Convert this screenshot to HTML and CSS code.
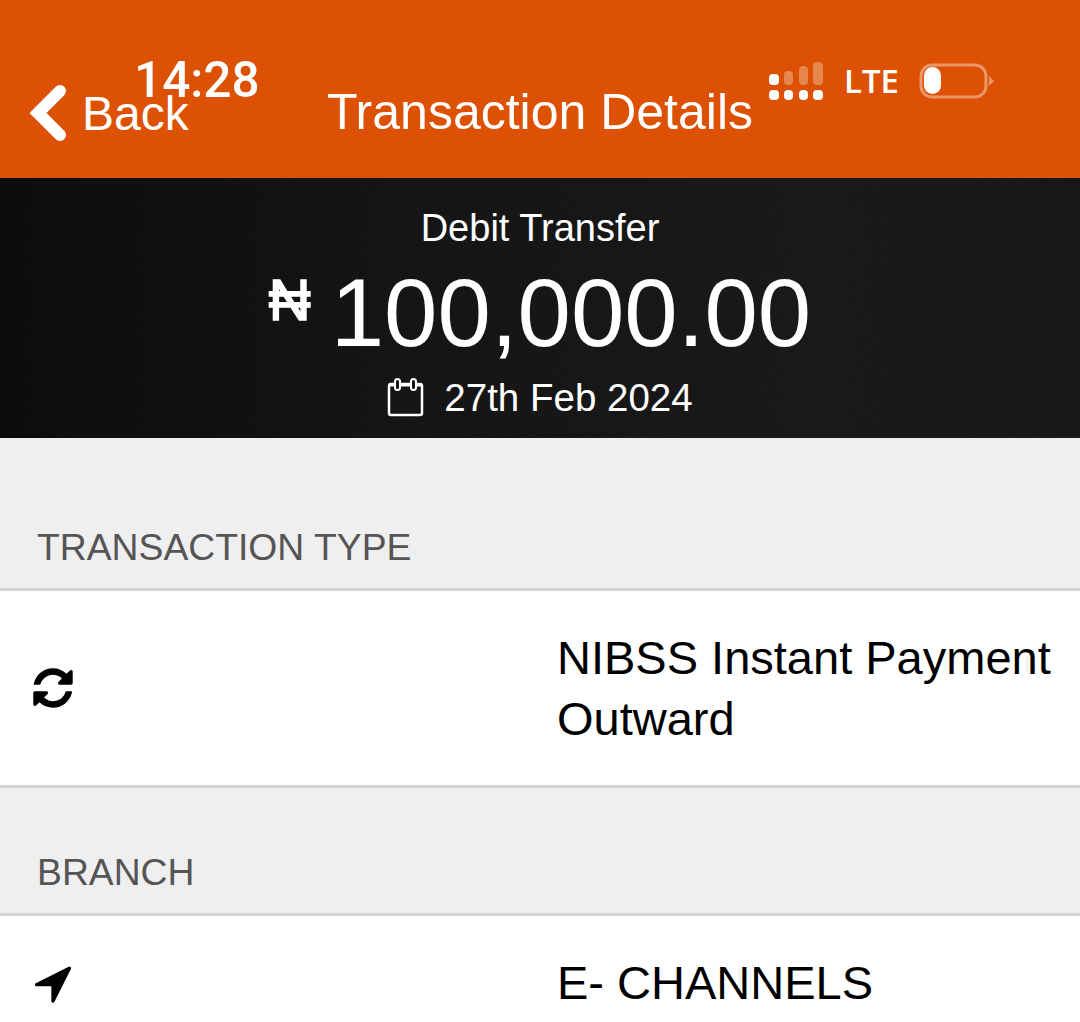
FILE: index.html
```html
<!DOCTYPE html>
<html>
<head>
    <title>Transaction Details</title>
    <link rel="stylesheet" href="styles.css">
</head>
<body>
    <header class="navbar">
        <a class="back">
            <svg class="back-icon" width="38" height="60" viewBox="0 0 38 60">
                <path d="M31 8 L9 30 L31 52" fill="none" stroke="#fff" stroke-width="12" stroke-linecap="round" stroke-linejoin="miter"/>
            </svg>
            <span>Back</span>
        </a>
        <h1 class="title">Transaction Details</h1>
        <span class="clock">14:28</span>
        <div class="status">
            <svg width="55" height="39" viewBox="0 0 55 39">
                <g fill="#fff">
                    <rect x="0" y="12" width="10" height="11" rx="4"/>
                    <rect x="0" y="28" width="10" height="10" rx="4"/>
                    <rect x="15" y="28" width="9" height="10" rx="4"/>
                    <rect x="30" y="28" width="9" height="10" rx="4"/>
                    <rect x="44" y="28" width="10" height="10" rx="4"/>
                </g>
                <g fill="#fff" fill-opacity="0.3">
                    <rect x="15" y="9" width="9" height="14" rx="4"/>
                    <rect x="30" y="4" width="9" height="19" rx="4"/>
                    <rect x="44" y="0" width="10" height="23" rx="4"/>
                </g>
            </svg>
            <span class="lte">LTE</span>
            <svg width="76" height="36" viewBox="0 0 76 36">
                <rect x="2" y="2" width="65" height="32" rx="11" fill="none" stroke="#fff" stroke-opacity="0.4" stroke-width="3"/>
                <rect x="5" y="4" width="17" height="27" rx="8.500" fill="#fff"/>
                <path d="M70 13 L75 18 L70 23 Z" fill="#fff" fill-opacity="0.4"/>
            </svg>
        </div>
    </header>

    <section class="summary">
        <p class="summary-type">Debit Transfer</p>
        <div class="amount">
            <span class="currency">₦</span>
            <span class="value">100,000.00</span>
        </div>
        <div class="date">
            <svg width="38" height="40" viewBox="0 0 38 40">
                <rect x="2" y="6" width="33" height="31" rx="2" fill="none" stroke="#fff" stroke-width="2.500"/>
                <path d="M2 7 H35" stroke="#fff" stroke-width="3"/>
                <rect x="8" y="1" width="5" height="11" rx="2.500" fill="#151515" stroke="#fff" stroke-width="2"/>
                <rect x="24" y="1" width="5" height="11" rx="2.500" fill="#151515" stroke="#fff" stroke-width="2"/>
            </svg>
            <span>27th Feb 2024</span>
        </div>
    </section>

    <main>
        <h2 class="section-label first">TRANSACTION TYPE</h2>
        <div class="row">
            <svg class="row-icon" width="46" height="46" viewBox="0 0 1792 1792">
                <path d="M1639 1056q0 5-1 7-64 268-268 434.500t-478 166.500q-146 0-282.500-55t-243.500-157l-129 129q-19 19-45 19t-45-19-19-45v-448q0-26 19-45t45-19h448q26 0 45 19t19 45-19 45l-137 137q71 66 161 102t187 36q134 0 250-65t186-179q11-17 53-117 8-23 30-23h192q13 0 22.500 9.500t9.500 22.500zm25-800v448q0 26-19 45t-45 19h-448q-26 0-45-19t-19-45 19-45l138-138q-148-137-349-137-134 0-250 65t-186 179q-11 17-53 117-8 23-30 23h-199q-13 0-22.500-9.500t-9.500-22.500v-7q65-268 270-434.500t480-166.500q146 0 284 55.500t245 156.500l130-129q19-19 45-19t45 19 19 45z" fill="#000"/>
            </svg>
            <div class="row-value">NIBSS Instant Payment Outward</div>
        </div>
        <h2 class="section-label">BRANCH</h2>
        <div class="row">
            <svg class="row-icon" width="46" height="46" viewBox="0 0 1792 1792">
                <path d="M1593 349l-640 1280q-17 35-57 35-5 0-15-2-22-5-35.500-22.500t-13.500-39.500v-576h-576q-22 0-39.500-13.500t-22.500-35.500 4-42 29-30l1280-640q13-7 29-7 27 0 45 19 15 14 18.500 34.500t-6.500 39.500z" fill="#000"/>
            </svg>
            <div class="row-value">E- CHANNELS</div>
        </div>
    </main>
</body>
</html>
```

FILE: styles.css
```css
/* Reset default margin and padding */
body, h1, h2, p {
    margin: 0;
    padding: 0;
}

html {
    overflow: hidden;
}

body {
    height: 1022px;
    overflow: hidden;
    background-color: #efefef;
    font-family: "Liberation Sans", Arial, sans-serif;
}

/* Orange nav bar */
.navbar {
    position: relative;
    height: 178px;
    background-color: #dd5104;
    color: white;
}

.back {
    position: absolute;
    left: 29px;
    top: 83px;
    display: flex;
    align-items: center;
    gap: 15px;
    font-size: 48px;
}

.title {
    padding-top: 82px;
    text-align: center;
    font-size: 50px;
    font-weight: normal;
    line-height: 60px;
}

/* Phone status bar drawn over the nav bar */
.clock {
    position: absolute;
    left: 134px;
    top: 54px;
    font-family: Roboto, sans-serif;
    font-size: 49.500px;
    font-weight: 500;
    line-height: 52px;
}

.status {
    position: absolute;
    left: 769px;
    top: 61px;
    display: flex;
    align-items: center;
    gap: 20px;
}

.lte {
    font-family: "Open Sans", sans-serif;
    font-size: 33px;
    font-weight: 600;
    line-height: 40px;
}

/* Dark summary band */
.summary {
    height: 260px;
    background-color: #151515;
    background-image:
        url("data:image/svg+xml,%3Csvg xmlns='http://www.w3.org/2000/svg' width='300' height='260'%3E%3Cfilter id='n'%3E%3CfeTurbulence type='fractalNoise' baseFrequency='0.7' numOctaves='2'/%3E%3CfeColorMatrix type='saturate' values='0'/%3E%3C/filter%3E%3Crect width='300' height='260' filter='url(%23n)' opacity='0.03'/%3E%3C/svg%3E"),
        linear-gradient(90deg, #090909 0%, #111111 35%, #161616 75%, #141414 100%);
    color: white;
    text-align: center;
}

.summary-type {
    padding-top: 28px;
    font-size: 38px;
    line-height: 44px;
}

.amount {
    display: flex;
    justify-content: center;
    align-items: flex-start;
    gap: 20px;
    padding-top: 15px;
    height: 96px;
}

.currency {
    padding-top: 2px;
    font-size: 58px;
    line-height: 66px;
    -webkit-text-stroke: 1.500px white;
}

.value {
    font-size: 96px;
    line-height: 96px;
}

.date {
    display: flex;
    justify-content: center;
    align-items: center;
    gap: 19px;
    margin-top: 15px;
    font-size: 38.500px;
    line-height: 44px;
}

/* Detail sections */
.section-label {
    display: flex;
    align-items: flex-end;
    height: 114px;
    padding: 0 0 11px 37px;
    border-bottom: 3px solid #d2d2d2;
    color: #555;
    font-size: 37.300px;
    font-weight: normal;
    line-height: 60px;
}

.section-label.first {
    height: 139px;
    padding-bottom: 11px;
}

.row {
    display: flex;
    align-items: center;
    padding: 36px 0;
    border-bottom: 3px solid #d2d2d2;
    background-color: white;
    color: black;
}

.row-icon {
    flex: none;
    margin-left: 30px;
}

.row-value {
    width: 510px;
    margin-left: 481px;
    font-size: 47px;
    line-height: 61px;
}
```
